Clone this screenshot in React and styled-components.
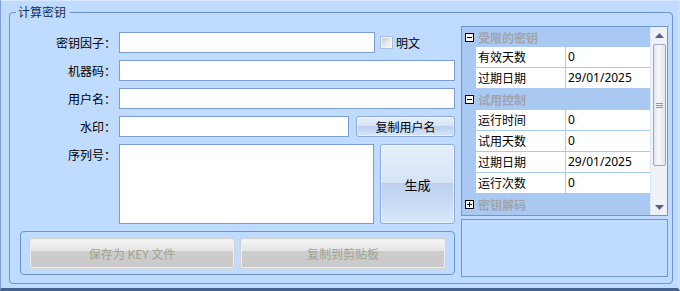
import React from "react";
import styled, { createGlobalStyle } from "styled-components";

const Global = createGlobalStyle`
  html, body { margin: 0; padding: 0; background: #bfdbff; }
  * { box-sizing: border-box; }
  body { font-family: "Noto Sans CJK SC", "Noto Sans", sans-serif; font-size: 12px; }
`;

const Window = styled.div`
  width: 680px;
  height: 291px;
  background: #bfdbff;
  border-left: 1px solid #7d9fd3;
  border-top: 1px solid #d8e9ff;
  border-bottom: 3px solid #44648f;
  border-right: 2px solid #cfe0f7;
  padding: 3px 0 0 8px;
`;

const Group = styled.fieldset`
  width: 664px;
  height: 280px;
  margin: 0;
  padding: 6px 3px 0 0;
  border: 1px solid #6b93d0;
  border-radius: 4px;
  min-width: 0;
`;

const Legend = styled.legend`
  margin-left: 6px;
  padding: 0 4px 0 2px;
  line-height: 16px;
  color: #15305a;
`;

const Body = styled.div`
  display: grid;
  grid-template-columns: 445px 207px;
  column-gap: 6px;
`;

const LeftCol = styled.div`
  display: flex;
  flex-direction: column;
`;

const Form = styled.div`
  display: grid;
  grid-template-columns: 106px 1fr;
  grid-template-rows: 21px 21px 21px 21px 80px;
  column-gap: 3px;
  row-gap: 7px;
  margin-top: 6px;
`;

const Label = styled.div`
  text-align: right;
  line-height: 21px;
  color: #000;
  align-self: start;
  white-space: nowrap;
`;

const Cell = styled.div`
  display: flex;
  align-items: ${(p) => (p.$top ? "stretch" : "center")};
  gap: ${(p) => p.$gap || 0}px;
`;

const TextBox = styled.input`
  width: ${(p) => p.$w}px;
  height: 21px;
  border: 1px solid #7a9ed6;
  background: #fff;
  padding: 0 3px;
  font: inherit;
  outline: none;
`;

const TextArea = styled.textarea`
  width: 255px;
  height: 80px;
  border: 1px solid #7a9ed6;
  background: #fff;
  resize: none;
  font: inherit;
  outline: none;
`;

const Check = styled.label`
  display: flex;
  align-items: center;
  gap: 3px;
  color: #000;
  line-height: 16px;
`;

const CheckBox = styled.span`
  width: 13px;
  height: 13px;
  border: 1px solid #a9bfdf;
  background: linear-gradient(135deg, #c2c6cc 0%, #e6e7e9 55%, #fbfbfb 100%);
  box-shadow: inset 0 0 0 1px #f4f6fa;
`;

const BlueButton = styled.button`
  width: ${(p) => p.$w}px;
  height: ${(p) => p.$h}px;
  padding: 0;
  border: 1px solid #8eaad6;
  border-radius: 3px;
  font: inherit;
  font-size: ${(p) => p.$fs || 12}px;
  color: #000;
  background: linear-gradient(
    to bottom,
    #e6effb 0%,
    #d6e4f7 48%,
    #bccfee 49%,
    #c7daf4 72%,
    #d8e9fd 100%
  );
  box-shadow: inset 0 0 0 1px rgba(255, 255, 255, 0.5);
`;

const ActionBox = styled.div`
  margin: 7px 0 0 10px;
  width: 435px;
  height: 44px;
  border: 1px solid #6b93d0;
  border-radius: 4px;
  padding: 6px 8px 0;
  display: flex;
  gap: 5px;
`;

const GrayButton = styled.button`
  flex: 1;
  height: 31px;
  padding: 0;
  border: 1px solid #d2d2d2;
  border-radius: 2px;
  font: inherit;
  color: #a3a393;
  background: linear-gradient(
    to bottom,
    #f6f6f6 0%,
    #e4e4e4 42%,
    #cdcdcd 43%,
    #c9c9c9 100%
  );
  box-shadow: inset 0 0 0 1px #efefef;
`;

const RightCol = styled.div`
  display: flex;
  flex-direction: column;
  gap: 3px;
`;

const PropGrid = styled.div`
  height: 190px;
  border: 1px solid #6f95cf;
  display: flex;
  overflow: hidden;
  background: #fff;
`;

const Rows = styled.div`
  flex: 1;
  display: flex;
  flex-direction: column;
`;

const CatRow = styled.div`
  flex: none;
  height: ${(p) => p.$h || 21}px;
  background: #a9c9f3;
  display: grid;
  grid-template-columns: 16px 1fr;
  align-items: center;
  font-weight: bold;
  color: #a0a5ad;
`;

const PropRow = styled.div`
  flex: none;
  height: 21px;
  display: grid;
  grid-template-columns: 14px 90px 1fr;
  border-bottom: 1px solid #a9c9f3;
  color: #000;
`;

const Margin = styled.div`
  background: #a9c9f3;
`;

const NameCell = styled.div`
  background: #fff;
  border-right: 1px solid #a9c9f3;
  padding-left: 2px;
  line-height: 20px;
  white-space: nowrap;
`;

const ValueCell = styled.div`
  background: #fff;
  padding-left: 2px;
  line-height: 20px;
  font-family: "Noto Sans", "Noto Sans CJK SC", sans-serif;
`;

const Toggle = styled.span`
  width: 9px;
  height: 9px;
  margin-left: 3px;
  border: 1px solid #000;
  background: #fff;
  position: relative;
  &::before {
    content: "";
    position: absolute;
    left: 1px;
    right: 1px;
    top: 3px;
    height: 1px;
    background: #000;
  }
  &::after {
    content: "";
    display: ${(p) => (p.$closed ? "block" : "none")};
    position: absolute;
    top: 1px;
    bottom: 1px;
    left: 3px;
    width: 1px;
    background: #000;
  }
`;

const ScrollBar = styled.div`
  width: 17px;
  flex: none;
  background: #eef2f8;
  border-left: 1px solid #e2e8f1;
  display: flex;
  flex-direction: column;
  align-items: center;
`;

const Arrow = styled.div`
  height: 16px;
  width: 100%;
  display: flex;
  align-items: center;
  justify-content: center;
`;

const Thumb = styled.div`
  width: 13px;
  height: 122px;
  margin-top: 1px;
  border: 1px solid #9aa9bf;
  border-radius: 2px;
  background: linear-gradient(to right, #dfe5ee 0%, #f4f6fa 40%, #e2e7ef 100%);
  display: flex;
  align-items: center;
  justify-content: center;
`;

const Track = styled.div`
  flex: 1;
`;

const Desc = styled.div`
  height: 58px;
  border: 1px solid #6f95cf;
  background: #bfdbff;
`;

const Grip = () => (
  <svg width="7" height="5" viewBox="0 0 7 5">
    <path d="M0 0.5H7M0 2.5H7M0 4.5H7" stroke="#8b97a8" strokeWidth="1" />
  </svg>
);

const UpArrow = () => (
  <svg width="9" height="5" viewBox="0 0 9 5">
    <path d="M4.5 0L9 5H0Z" fill="#4f6284" />
  </svg>
);

const DownArrow = () => (
  <svg width="9" height="5" viewBox="0 0 9 5">
    <path d="M0 0H9L4.5 5Z" fill="#4f6284" />
  </svg>
);

const props = [
  { cat: "受限的密钥", h: 20 },
  { name: "有效天数", value: "0" },
  { name: "过期日期", value: "29/01/2025" },
  { cat: "试用控制" },
  { name: "运行时间", value: "0" },
  { name: "试用天数", value: "0" },
  { name: "过期日期", value: "29/01/2025" },
  { name: "运行次数", value: "0" },
  { cat: "密钥解码", closed: true },
];

export default function App() {
  return (
    <>
      <Global />
      <Window>
        <Group>
          <Legend>计算密钥</Legend>
          <Body>
            <LeftCol>
              <Form>
                <Label>密钥因子：</Label>
                <Cell $gap={5}>
                  <TextBox $w={256} />
                  <Check>
                    <CheckBox />
                    明文
                  </Check>
                </Cell>
                <Label>机器码：</Label>
                <Cell>
                  <TextBox $w={336} />
                </Cell>
                <Label>用户名：</Label>
                <Cell>
                  <TextBox $w={336} />
                </Cell>
                <Label>水印：</Label>
                <Cell $gap={7}>
                  <TextBox $w={230} />
                  <BlueButton $w={99} $h={21}>复制用户名</BlueButton>
                </Cell>
                <Label>序列号：</Label>
                <Cell $top $gap={6}>
                  <TextArea />
                  <BlueButton $w={75} $h={80} $fs={13}>生成</BlueButton>
                </Cell>
              </Form>
              <ActionBox>
                <GrayButton disabled>保存为 KEY 文件</GrayButton>
                <GrayButton disabled>复制到剪贴板</GrayButton>
              </ActionBox>
            </LeftCol>
            <RightCol>
              <PropGrid>
                <Rows>
                  {props.map((p, i) =>
                    p.cat ? (
                      <CatRow key={i} $h={p.h}>
                        <Toggle $closed={p.closed} />
                        <span>{p.cat}</span>
                      </CatRow>
                    ) : (
                      <PropRow key={i}>
                        <Margin />
                        <NameCell>{p.name}</NameCell>
                        <ValueCell>{p.value}</ValueCell>
                      </PropRow>
                    )
                  )}
                </Rows>
                <ScrollBar>
                  <Arrow>
                    <UpArrow />
                  </Arrow>
                  <Thumb>
                    <Grip />
                  </Thumb>
                  <Track />
                  <Arrow>
                    <DownArrow />
                  </Arrow>
                </ScrollBar>
              </PropGrid>
              <Desc />
            </RightCol>
          </Body>
        </Group>
      </Window>
    </>
  );
}
